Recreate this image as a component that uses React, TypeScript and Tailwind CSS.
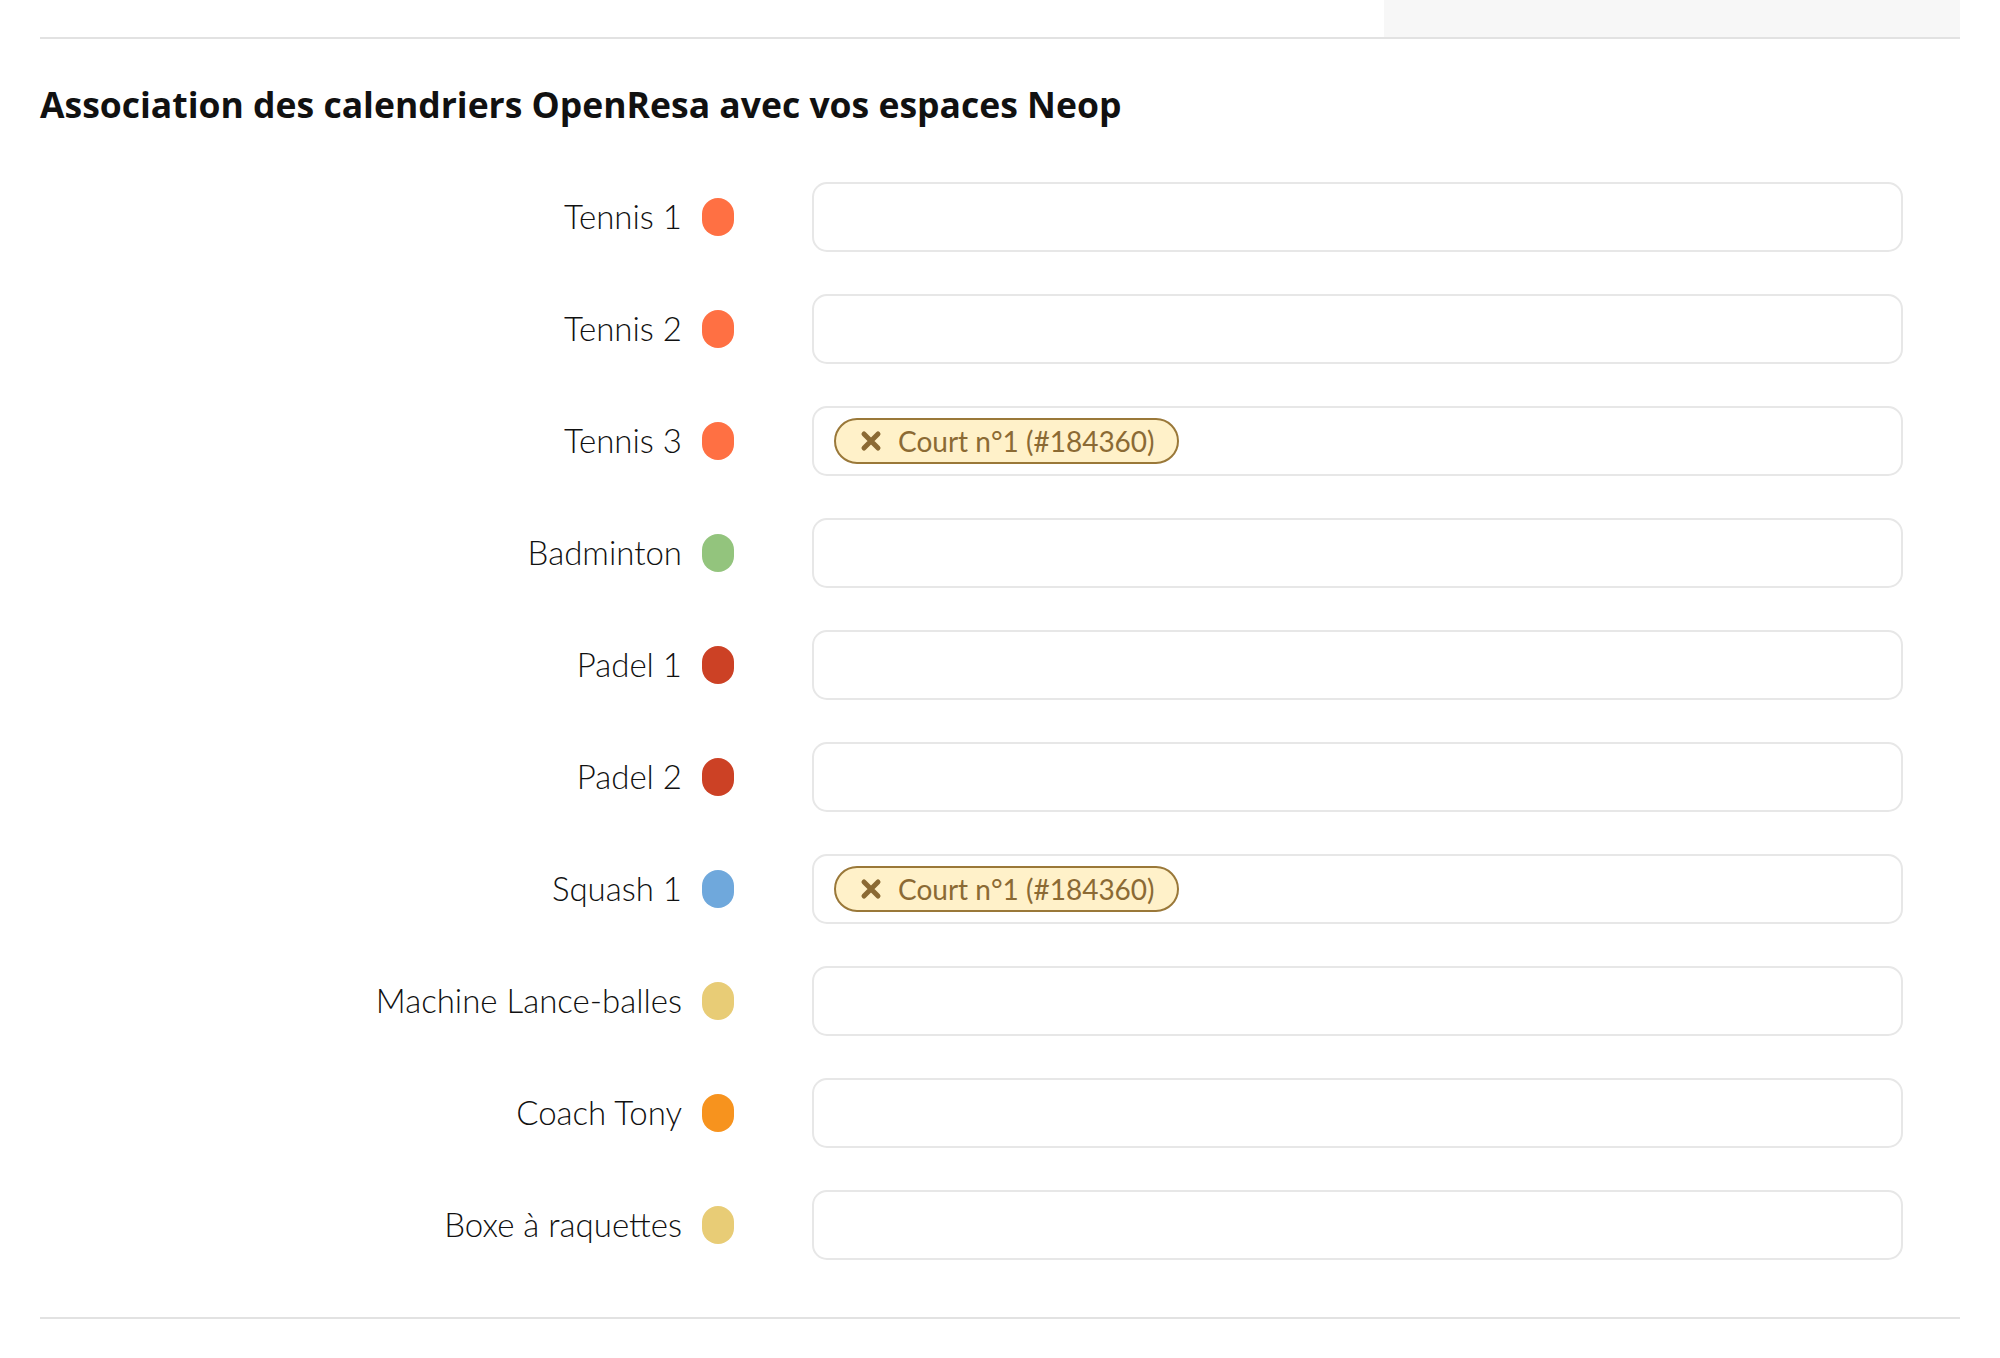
type Space = { name: string; color: string; linked?: string };

const SPACES: Space[] = [
    { name: "Tennis 1", color: "bg-[#ff7043]" },
    { name: "Tennis 2", color: "bg-[#ff7043]" },
    { name: "Tennis 3", color: "bg-[#ff7043]", linked: "Court n°1 (#184360)" },
    { name: "Badminton", color: "bg-[#93c47d]" },
    { name: "Padel 1", color: "bg-[#cc4125]" },
    { name: "Padel 2", color: "bg-[#cc4125]" },
    { name: "Squash 1", color: "bg-[#6fa8dc]", linked: "Court n°1 (#184360)" },
    { name: "Machine Lance-balles", color: "bg-[#e8cc76]" },
    { name: "Coach Tony", color: "bg-[#f7931e]" },
    { name: "Boxe à raquettes", color: "bg-[#e8cc76]" },
];

function Tag({ label }: { label: string }) {
    return (
        <span className="flex items-center h-[46px] pl-[24px] pr-[22px] gap-[16px] rounded-full border-2 border-[#9a7839] bg-[#fff1c9] text-[#8b6a34] text-[28px] leading-none">
            <svg width="22" height="22" viewBox="0 0 22 22" className="shrink-0">
                <path d="M4 4 L18 18 M18 4 L4 18" stroke="currentColor" strokeWidth="5" strokeLinecap="round" />
            </svg>
            <span>{label}</span>
        </span>
    );
}

function SpaceRow({ space }: { space: Space }) {
    return (
        <div className="flex items-center">
            <div className="w-[694px] flex items-center justify-end gap-5">
                <span className="text-[33px] font-light text-[#111] leading-none">{space.name}</span>
                <span className={`w-[32px] h-[38px] rounded-full ${space.color}`} />
            </div>
            <div className="ml-[78px] w-[1091px] h-[70px] rounded-[15px] border-2 border-[#e7e7e7] bg-white flex items-center px-[20px]">
                {space.linked && <Tag label={space.linked} />}
            </div>
        </div>
    );
}

export default function App() {
    return (
        <div className="w-[2000px] min-h-[1358px] bg-white px-10" style={{ fontFamily: "Lato, 'Open Sans', sans-serif" }}>
            <div className="flex justify-end border-b-2 border-[#e2e2e2]">
                <div className="w-[576px] h-[37px] bg-[#f7f7f7]" />
            </div>

            <h2 className="mt-[48px] text-[35.5px] font-bold text-[#111] leading-none" style={{ fontFamily: "'Open Sans', sans-serif" }}>
                Association des calendriers OpenResa avec vos espaces Neop
            </h2>

            <div className="mt-[59px] flex flex-col gap-[42px]">
                {SPACES.map((s) => (
                    <SpaceRow key={s.name} space={s} />
                ))}
            </div>

            <div className="mt-[57px] border-b-2 border-[#e2e2e2]" />
        </div>
    );
}
